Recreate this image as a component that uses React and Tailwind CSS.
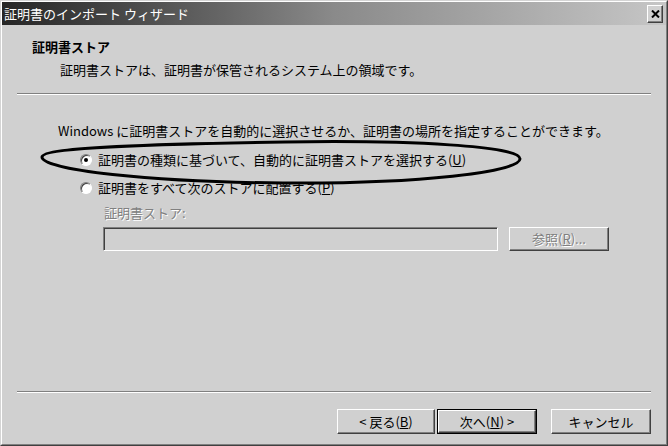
const font = "font-['Noto_Sans_CJK_JP','Noto_Sans_CJK_SC',sans-serif]";

const raised =
  'border border-t-white border-l-white border-r-[#404040] border-b-[#404040] shadow-[inset_-1px_-1px_0_#808080]';

const Radio = ({ checked }) => (
  <div className="w-[12px] h-[12px] rounded-full bg-white border border-t-[#808080] border-l-[#808080] border-r-white border-b-white shadow-[inset_1px_1px_0_#404040] flex items-center justify-center">
    {checked && <div className="w-[4px] h-[4px] rounded-full bg-black" />}
  </div>
);

const App = () => {
  return (
    <div className={`${font} text-[13px] leading-[16px] text-black`}>
      <div className="relative w-[668px] h-[446px] border border-t-[#d4d4d4] border-l-[#d4d4d4] border-r-[#404040] border-b-[#404040]">
        <div className="w-full h-full flex flex-col bg-[#d0d0d0] border border-t-white border-l-white border-r-[#808080] border-b-[#808080]">
          {/* title bar */}
          <div className="h-[23px] flex items-center justify-between bg-gradient-to-r from-[#262626] via-[#8a8a8a] to-[#c6c6c6] pl-[2px] pr-[3px]">
            <span className="text-white text-[13px]">証明書のインポート ウィザード</span>
            <div className={`w-[16px] h-[18px] bg-[#d0d0d0] ${raised} flex items-center justify-center`}>
              <svg width="9" height="8" viewBox="0 0 9 8">
                <path d="M1 0.5 L8 7.5 M8 0.5 L1 7.5" stroke="black" strokeWidth="2" />
              </svg>
            </div>
          </div>

          {/* header */}
          <div className="pl-[30px] mt-[14px] font-bold">証明書ストア</div>
          <div className="pl-[58px] mt-[7px]">証明書ストアは、証明書が保管されるシステム上の領域です。</div>

          <div className="mx-[15px] mt-[15px] border-t border-t-[#808080] border-b border-b-white" />

          {/* body */}
          <div className="pl-[56px] mt-[28px]">
            Windows に証明書ストアを自動的に選択させるか、証明書の場所を指定することができます。
          </div>

          <div className="flex items-center pl-[78px] mt-[13px] gap-[6px]">
            <Radio checked />
            <span>
              証明書の種類に基づいて、自動的に証明書ストアを選択する(<u>U</u>)
            </span>
          </div>
          <div className="flex items-center pl-[78px] mt-[12px] gap-[6px]">
            <Radio />
            <span>
              証明書をすべて次のストアに配置する(<u>P</u>)
            </span>
          </div>

          <div className="pl-[102px] mt-[9px] text-[#808080] [text-shadow:1px_1px_0_#fff]">証明書ストア:</div>
          <div className="flex pl-[101px] mt-[6px] gap-[11px]">
            <div className="w-[395px] h-[24px] border border-t-[#808080] border-l-[#808080] border-r-white border-b-white shadow-[inset_1px_1px_0_#404040]" />
            <div className={`w-[100px] h-[24px] ${raised} flex items-center justify-center text-[#808080] [text-shadow:1px_1px_0_#fff]`}>
              参照(<u>R</u>)...
            </div>
          </div>

          <div className="flex-1" />

          <div className="mx-[15px] border-t border-t-[#808080] border-b border-b-white" />

          {/* buttons */}
          <div className="flex pl-[335px] mt-[16px] mb-[10px]">
            <div className={`w-[98px] h-[25px] ${raised} flex items-center justify-center`}>
              &lt; 戻る(<u>B</u>)
            </div>
            <div className="ml-[2px] w-[100px] h-[25px] border border-black">
              <div className={`w-full h-full ${raised} flex items-center justify-center`}>
                次へ(<u>N</u>) &gt;
              </div>
            </div>
            <div className={`ml-[14px] w-[100px] h-[25px] ${raised} flex items-center justify-center`}>
              キャンセル
            </div>
          </div>
        </div>

        {/* hand-drawn annotation */}
        <svg className="absolute left-[-1px] top-[-1px] pointer-events-none" width="668" height="446">
          <path
            d="M520 159 C521 146 410 140 285 142 C160 144 42 147 42 157 C42 170 150 182 283 183 C420 184 519 172 520 159 Z"
            fill="none"
            stroke="black"
            strokeWidth="3"
          />
        </svg>
      </div>
    </div>
  );
};

export default App;
